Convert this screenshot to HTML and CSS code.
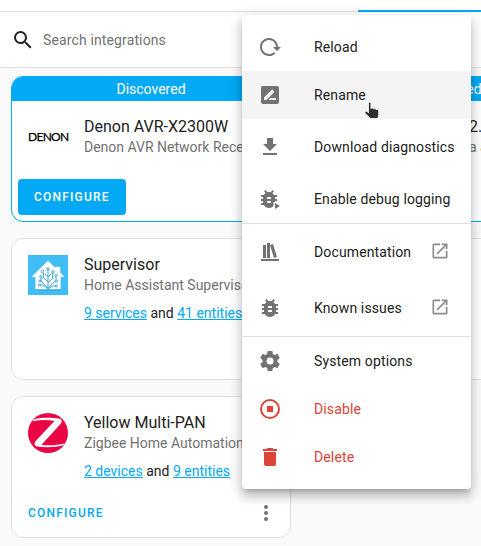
FILE: index.html
```html
<!DOCTYPE html>
<html lang="en">
<head>
<meta charset="utf-8">
<title>Integrations</title>
<link rel="stylesheet" href="styles.css">
</head>
<body>
<div class="tabs"><div class="tab-active"></div></div>
<div class="search">
  <svg class="icon" viewBox="0 0 24 24"><path d="M9.5,3A6.5,6.5 0 0,1 16,9.5C16,11.11 15.41,12.59 14.44,13.73L14.71,14H15.5L20.5,19L19,20.5L14,15.5V14.71L13.73,14.44C12.59,15.41 11.11,16 9.5,16A6.5,6.5 0 0,1 3,9.5A6.5,6.5 0 0,1 9.5,3M9.5,5C7,5 5,7 5,9.5C5,12 7,14 9.5,14C12,14 14,12 14,9.5C14,7 12,5 9.5,5Z"/></svg>
  <span>Search integrations</span>
</div>
<main class="grid">
  <section class="card discovered">
    <header class="banner">Discovered</header>
    <div class="content">
      <div class="logo denon">DENON</div>
      <div class="info">
        <div class="title">Denon AVR-X2300W</div>
        <div class="sub">Denon AVR Network Receivers</div>
      </div>
    </div>
    <div class="actions"><button class="btn raised">CONFIGURE</button></div>
  </section>
  <section class="card discovered">
    <header class="banner">Discovered</header>
    <div class="content">
      <div class="logo"></div>
      <div class="info far">
        <div class="title">2.</div>
        <div class="sub">a a</div>
      </div>
    </div>
  </section>
  <section class="card">
    <div class="content">
      <svg class="logo" viewBox="0 0 40 40">
        <path fill="#41bdf5" d="M0 0H40V40H0Z"/>
        <path fill="#249fd5" d="M8 34.4H33.500L32.500 35.500H8.500Z"/>
        <path fill="#fff" d="M20 6L27.500 13.200V12H32V17.600L36 21.700H32.300V34H7.700V21.700H4Z" stroke="#fff" stroke-width=".5" stroke-linejoin="round"/>
        <g fill="none" stroke="#41a9d9" stroke-width="1">
          <path d="M20 34V14M20 33L13 26V23M20 27L15.500 22.500V18M20 22L17 19M20 33L28 25V22M20 28L24.500 23.500V18M20 22L23 19M20 34L15 30H12M20 34L25 31H28"/>
          <circle cx="20" cy="14" r="1.200"/><circle cx="13" cy="21.800" r="1.200"/><circle cx="14.500" cy="16.500" r="1.300"/><circle cx="25" cy="17" r="1.300"/><circle cx="28" cy="20.700" r="1.200"/><circle cx="11.500" cy="30" r="1"/><circle cx="28.500" cy="31" r="1"/><circle cx="12" cy="26" r="1"/><circle cx="28.500" cy="26" r="1"/>
        </g>
      </svg>
      <div class="info">
        <div class="title">Supervisor</div>
        <div class="sub">Home Assistant Supervisor</div>
        <div class="links"><a>9 services</a> and <a>41 entities</a></div>
      </div>
    </div>
  </section>
  <section class="card"></section>
  <section class="card">
    <div class="content">
      <svg class="logo" viewBox="0 0 40 40">
        <circle cx="20" cy="20" r="20" fill="#eb0443"/>
        <path fill="#fff" d="M6 6.200C14 4.400 24 4.600 31 5.600C34 6.200 34.500 8.500 32.500 11L13.500 31.700C20 32.800 29 32.300 37 30.500L36 32.100C28 34.400 18 34.800 9.500 33.600C6.200 33 5.800 30.200 7.700 28L26.500 8C19 6.500 12 6.900 4.500 8.300Z"/>
      </svg>
      <div class="info">
        <div class="title">Yellow Multi-PAN</div>
        <div class="sub">Zigbee Home Automation</div>
        <div class="links"><a>2 devices</a> and <a>9 entities</a></div>
      </div>
    </div>
    <div class="actions">
      <button class="btn">CONFIGURE</button>
      <svg class="icon grey" viewBox="0 0 24 24"><path d="M12,16A2,2 0 0,1 14,18A2,2 0 0,1 12,20A2,2 0 0,1 10,18A2,2 0 0,1 12,16M12,10A2,2 0 0,1 14,12A2,2 0 0,1 12,14A2,2 0 0,1 10,12A2,2 0 0,1 12,10M12,4A2,2 0 0,1 14,6A2,2 0 0,1 12,8A2,2 0 0,1 10,6A2,2 0 0,1 12,4Z"/></svg>
    </div>
  </section>
</main>

<div class="menu">
  <div class="item"><svg class="icon" viewBox="0 0 24 24"><path d="M2 12C2 16.97 6.03 21 11 21C13.39 21 15.68 20.06 17.4 18.4L15.9 16.9C14.63 18.25 12.86 19 11 19C4.76 19 1.64 11.46 6.05 7.05C10.46 2.64 18 5.77 18 12H15L19 16H19.1L23 12H20C20 7.03 15.97 3 11 3C6.03 3 2 7.03 2 12Z"/></svg><span>Reload</span></div>
  <div class="item hover"><svg class="icon" viewBox="0 0 24 24"><path d="M18,17H10.5L12.5,15H18M6,17V14.5L13.88,6.65C14.07,6.45 14.39,6.45 14.59,6.65L16.35,8.41C16.55,8.61 16.55,8.92 16.35,9.12L8.47,17M19,3H5C3.89,3 3,3.89 3,5V19A2,2 0 0,0 5,21H19A2,2 0 0,0 21,19V5C21,3.89 20.1,3 19,3Z"/></svg><span>Rename</span></div>
  <div class="item tall"><svg class="icon" viewBox="0 0 24 24"><path d="M5,20H19V18H5M19,9H15V3H9V9H5L12,16L19,9Z"/></svg><span>Download diagnostics</span></div>
  <div class="item"><svg class="icon" viewBox="0 0 24 24"><path transform="translate(-1 0)" d="M14,12H10V10H14M14,16H10V14H14M20,8H17.19C16.74,7.22 16.12,6.55 15.37,6.04L17,4.41L15.59,3L13.42,5.17C12.96,5.06 12.5,5 12,5C11.5,5 11.04,5.06 10.59,5.17L8.41,3L7,4.41L8.62,6.04C7.88,6.55 7.26,7.22 6.81,8H4V10H6.09C6.04,10.33 6,10.66 6,11V12H4V14H6V15C6,15.34 6.04,15.67 6.09,16H4V18H6.81C7.85,19.79 9.78,21 12,21C14.22,21 16.15,19.79 17.19,18H20V16H17.91C17.96,15.67 18,15.34 18,15V14H20V12H18V11C18,10.66 17.96,10.33 17.91,10H20V8Z"/><path fill="#fff" d="M15.500 15H24V24H15.500Z"/><path d="M17 16V22L22 19Z"/></svg><span>Enable debug logging</span></div>
  <div class="divider"></div>
  <div class="item tall"><svg class="icon" viewBox="0 0 24 24"><path d="M9 3V18H12V3H9M12 5L16 18L19 17L15 4L12 5M5 5V18H8V5H5M3 19V21H21V19H3Z"/></svg><span>Documentation</span><svg class="open" viewBox="0 0 24 24"><path d="M14,3V5H17.59L7.76,14.83L9.17,16.24L19,6.41V10H21V3M19,19H5V5H12V3H5C3.89,3 3,3.9 3,5V19A2,2 0 0,0 5,21H19A2,2 0 0,0 21,19V12H19V19Z"/></svg></div>
  <div class="item tall"><svg class="icon" viewBox="0 0 24 24"><path d="M14,12H10V10H14M14,16H10V14H14M20,8H17.19C16.74,7.22 16.12,6.55 15.37,6.04L17,4.41L15.59,3L13.42,5.17C12.96,5.06 12.5,5 12,5C11.5,5 11.04,5.06 10.59,5.17L8.41,3L7,4.41L8.62,6.04C7.88,6.55 7.26,7.22 6.81,8H4V10H6.09C6.04,10.33 6,10.66 6,11V12H4V14H6V15C6,15.34 6.04,15.67 6.09,16H4V18H6.81C7.85,19.79 9.78,21 12,21C14.22,21 16.15,19.79 17.19,18H20V16H17.91C17.96,15.67 18,15.34 18,15V14H20V12H18V11C18,10.66 17.96,10.33 17.91,10H20V8Z"/></svg><span>Known issues</span><svg class="open" viewBox="0 0 24 24"><path d="M14,3V5H17.59L7.76,14.83L9.17,16.24L19,6.41V10H21V3M19,19H5V5H12V3H5C3.89,3 3,3.9 3,5V19A2,2 0 0,0 5,21H19A2,2 0 0,0 21,19V12H19V19Z"/></svg></div>
  <div class="divider"></div>
  <div class="item"><svg class="icon" viewBox="0 0 24 24"><path d="M12,15.5A3.5,3.5 0 0,1 8.5,12A3.5,3.5 0 0,1 12,8.5A3.5,3.5 0 0,1 15.5,12A3.5,3.5 0 0,1 12,15.5M19.43,12.97C19.47,12.65 19.5,12.33 19.5,12C19.5,11.67 19.47,11.34 19.43,11L21.54,9.37C21.73,9.22 21.78,8.95 21.66,8.73L19.66,5.27C19.54,5.05 19.27,4.96 19.05,5.05L16.56,6.05C16.04,5.66 15.5,5.32 14.87,5.07L14.5,2.42C14.46,2.18 14.25,2 14,2H10C9.75,2 9.54,2.18 9.5,2.42L9.13,5.07C8.5,5.32 7.96,5.66 7.44,6.05L4.95,5.05C4.73,4.96 4.46,5.05 4.34,5.27L2.34,8.73C2.21,8.95 2.27,9.22 2.46,9.37L4.57,11C4.53,11.34 4.5,11.67 4.5,12C4.5,12.33 4.53,12.65 4.57,12.97L2.46,14.63C2.27,14.78 2.21,15.05 2.34,15.27L4.34,18.73C4.46,18.95 4.73,19.03 4.95,18.95L7.44,17.94C7.96,18.34 8.5,18.68 9.13,18.93L9.5,21.58C9.54,21.82 9.75,22 10,22H14C14.25,22 14.46,21.82 14.5,21.58L14.87,18.93C15.5,18.67 16.04,18.34 16.56,17.94L19.05,18.95C19.27,19.03 19.54,18.95 19.66,18.73L21.66,15.27C21.78,15.05 21.73,14.78 21.54,14.63L19.43,12.97Z"/></svg><span>System options</span></div>
  <div class="item danger"><svg class="icon" viewBox="0 0 24 24"><path fill-rule="evenodd" d="M12,2A10,10 0 0,0 2,12A10,10 0 0,0 12,22A10,10 0 0,0 22,12A10,10 0 0,0 12,2M12,4A8,8 0 0,1 20,12A8,8 0 0,1 12,20A8,8 0 0,1 4,12A8,8 0 0,1 12,4M9,9V15H15V9"/></svg><span>Disable</span></div>
  <div class="item danger"><svg class="icon" viewBox="0 0 24 24"><path d="M19,4H15.5L14.5,3H9.5L8.5,4H5V6H19M6,19A2,2 0 0,0 8,21H16A2,2 0 0,0 18,19V7H6V19Z"/></svg><span>Delete</span></div>
</div>
<svg class="cursor" viewBox="0 0 18 20"><path d="M4.500 2.200C4.500.8 6.800.8 6.900 2.200V7.600C7.500 6.500 9.300 6.700 9.500 8C10.300 7.200 11.900 7.500 12.100 8.700C13.200 8 14.700 8.500 14.700 10V13.500C14.700 15.200 14 16 13.700 17.500H5.800C5.200 15.500 2.300 13.600 1.200 12.200C.3 10.800 1.700 9.700 3 10.500L4.500 11.800Z"/></svg>
</body>
</html>
```
FILE: styles.css
```css
* { box-sizing: border-box; }
body {
  margin: 0;
  height: 546px;
  overflow: hidden;
  position: relative;
  background: #fafafa;
  color: #212121;
  font-family: Roboto, sans-serif;
  font-size: 14px;
}
.tabs {
  height: 12px;
  background: #fff;
  border-bottom: 1px solid #e0e0e0;
}
.tab-active {
  height: 12px;
  margin-left: 358px;
  border-bottom: 2px solid #03a9f4;
}
.search {
  display: flex;
  align-items: center;
  gap: 8px;
  height: 56px;
  padding-left: 11px;
  background: #fff;
  border-bottom: 1px solid #e0e0e0;
  color: #727272;
  letter-spacing: .13px;
}
.icon { width: 24px; height: 24px; flex: none; fill: #212121; }
.grid {
  display: grid;
  grid-template-columns: 280px 280px;
  grid-template-rows: 146px 142px 142px;
  gap: 16px;
  padding: 8px 0 0 11px;
  overflow: hidden;
}
.card {
  display: flex;
  flex-direction: column;
  background: #fff;
  border: 1px solid #e0e0e0;
  border-radius: 12px;
  overflow: hidden;
}
.discovered { border-color: #03a9f4; }
.banner {
  height: 24px;
  line-height: 24px;
  text-align: center;
  color: #fff;
  background: #03a9f4;
}
.content {
  display: flex;
  gap: 16px;
  padding: 16px 16px 0;
}
.logo { width: 40px; height: 40px; flex: none; }
.denon {
  font: 12px/40px Lato, sans-serif;
  letter-spacing: -.7px;
  -webkit-text-stroke: .25px #000;
  color: #000;
  white-space: nowrap;
}
.info { white-space: nowrap; line-height: 20px; }
.far { padding-left: 89px; }
.title { font-size: 16px; }
.sub { color: #727272; }
.links { margin-top: 8px; }
.links a { color: #03a9f4; text-decoration: underline; }
.actions {
  display: flex;
  align-items: center;
  justify-content: space-between;
  margin-top: auto;
  padding: 0 12px 6px 0;
}
.btn {
  height: 36px;
  padding: 0 16px;
  border: 0;
  border-radius: 4px;
  background: none;
  color: #03a9f4;
  font: 500 12px Roboto, sans-serif;
  letter-spacing: 1.2px;
}
.raised { margin-left: 6px; background: #03a9f4; color: #fff; }
.grey { fill: #727272; }
.menu {
  position: absolute;
  left: 242px;
  top: 15px;
  width: 229px;
  padding: 8px 0;
  background: #fff;
  border-radius: 4px;
  box-shadow: 0 5px 5px -3px rgba(0,0,0,.2), 0 8px 10px 1px rgba(0,0,0,.14), 0 3px 14px 2px rgba(0,0,0,.12);
}
.item {
  display: flex;
  align-items: center;
  height: 48px;
  padding: 0 21px 0 16px;
  letter-spacing: .13px;
  white-space: nowrap;
}
.item .icon { margin-right: 32px; fill: #727272; }
.tall { height: 56px; }
.hover { background: #f4f4f4; }
.item .open {
  width: 20px;
  height: 20px;
  flex: none;
  margin: 0 0 2px auto;
  fill: #8a8a8a;
}
.divider { height: 1px; background: #e0e0e0; }
.danger { color: #db4437; }
.danger .icon { fill: #db4437; }
.cursor {
  position: absolute;
  left: 363px;
  top: 101px;
  width: 20px;
  height: 20px;
  fill: #2e2e2e;
  stroke: #fff;
  stroke-width: .8;
}
```
